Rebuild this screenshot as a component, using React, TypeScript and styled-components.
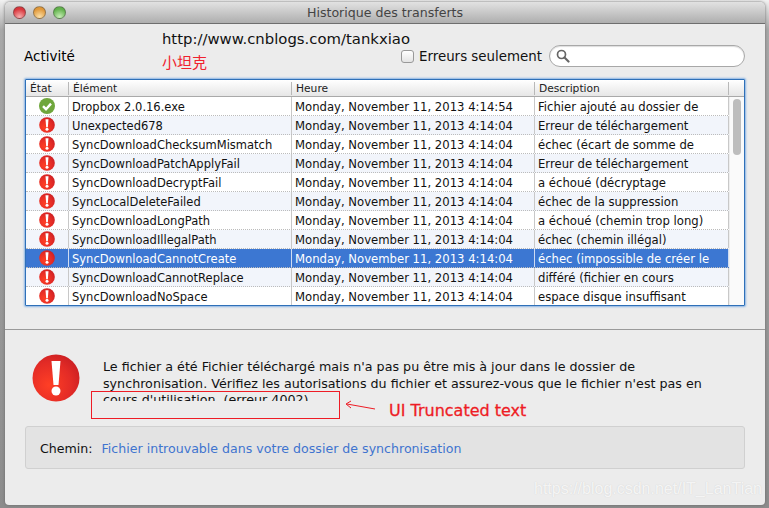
import styled, { createGlobalStyle } from 'styled-components'

const GlobalStyle = createGlobalStyle`
    html, body {
        margin: 0;
        padding: 0;
        width: 769px;
        height: 508px;
        overflow: hidden;
        background: linear-gradient(#f2f2f2 0, #a8a8a8 30px, #8c8c8c 100%);
        font-family: "DejaVu Sans", "Noto Sans CJK SC", sans-serif;
    }
`

const Page = styled.div`
    position: relative;
    width: 769px;
    height: 508px;
    padding: 2px 4px 3px 5px;
    box-sizing: border-box;
`

const Window = styled.div`
    height: 100%;
    display: flex;
    flex-direction: column;
    background: #ececec;
    border-radius: 5px 5px 4px 4px;
    box-shadow: 0 0 3px #666;
    overflow: hidden;
`

const TitleBar = styled.div`
    position: relative;
    height: 21px;
    flex: none;
    display: flex;
    align-items: center;
    justify-content: center;
    background: linear-gradient(#e2e2e2, #aeaeae);
    border-bottom: 1px solid #6e6e6e;
    font-size: 12.6px;
    color: #444;
`

const Lights = styled.div`
    position: absolute;
    left: 8px;
    top: 4px;
    display: flex;
    gap: 7px;
`

const Light = styled.span<{ $color: string; $glow: string }>`
    width: 13px;
    height: 13px;
    border-radius: 50%;
    box-sizing: border-box;
    border: 1px solid rgba(70, 70, 70, 0.5);
    background: radial-gradient(circle at 50% 90%, ${props => props.$glow} 0, ${props => props.$color} 70%);
`

const TopArea = styled.div`
    height: 306px;
    flex: none;
    box-sizing: border-box;
    padding: 0 20px;
    border-bottom: 1px solid #9a9a9a;
`

const Toolbar = styled.div`
    height: 55px;
    display: flex;
    align-items: flex-start;
`

const Heading = styled.div`
    width: 139px;
    margin: 23px 0 0 -1px;
    font-size: 13.5px;
    line-height: 18px;
    color: #000;
`

const Credit = styled.div`
    width: 239px;
    margin-left: -1px;
`

const Url = styled.div`
    margin-top: 6px;
    font-size: 14.85px;
    line-height: 18px;
    color: #111;
`

const Cn = styled.div`
    margin-top: 5px;
    font-family: "Noto Sans CJK SC", sans-serif;
    font-size: 15px;
    line-height: 18px;
    color: #f0222e;
`

const ErrorsOnly = styled.label`
    display: flex;
    align-items: center;
    gap: 5px;
    margin-top: 23px;
    height: 18px;
    font-size: 13.4px;
    color: #111;
    white-space: nowrap;
`

const CheckBox = styled.span`
    width: 13px;
    height: 13px;
    box-sizing: border-box;
    border: 1px solid #999;
    border-radius: 3px;
    background: linear-gradient(#fff, #e4e4e4);
`

const Search = styled.div`
    margin-left: 7px;
    margin-top: 21px;
    width: 196px;
    height: 22px;
    box-sizing: border-box;
    padding-left: 6px;
    display: flex;
    align-items: center;
    background: #fff;
    border: 1px solid #a8a8a8;
    border-radius: 11px;
    box-shadow: inset 0 1px 1px #ddd;
`

const Frame = styled.div`
    height: 225px;
    background: #fff;
    border: 1px solid #2f70b8;
    box-shadow: 0 0 2px 1px #8ab4e4;
    border-radius: 1px;
    display: flex;
    flex-direction: column;
    overflow: hidden;
`

const Columns = styled.div`
    display: grid;
    grid-template-columns: 43px 223px 243px 194px 15px;
`

const Header = styled(Columns)`
    height: 17px;
    flex: none;
    box-sizing: border-box;
    background: linear-gradient(#fff, #e6e6e6);
    border-bottom: 1px solid #a9a9a9;
    font-size: 10.7px;
    color: #222;
`

const HeaderCell = styled.div`
    padding-left: 4px;
    margin: 2px 0 1px;
    line-height: 13px;
    border-right: 1px solid #b8b8b8;
`

const Row = styled(Columns)<{ $striped: boolean; $selected: boolean }>`
    height: 19px;
    flex: none;
    box-sizing: border-box;
    border-bottom: 1px dotted #bcbcbc;
    font-size: 11.65px;
    line-height: 20px;
    color: ${props => (props.$selected ? '#fff' : '#111')};
    background: ${props => (props.$selected ? '#3c77d2' : props.$striped ? '#f2f5fb' : '#fff')};
`

const Cell = styled.div<{ $selected: boolean }>`
    padding-left: 3px;
    white-space: nowrap;
    overflow: hidden;
    border-right: 1px solid ${props => (props.$selected ? '#cfdcf2' : '#c8c8c8')};
`

const NameCell = styled(Cell)`
    font-size: 11.5px;
`

const IconCell = styled(Cell)`
    padding: 0;
    display: flex;
    align-items: center;
    justify-content: center;
`

const Body = styled.div`
    position: relative;
    flex: 1;
    min-height: 0;
`

const Rows = styled.div`
    display: flex;
    flex-direction: column;
`

const ScrollGutter = styled.div`
    position: absolute;
    top: 0;
    right: 0;
    bottom: 0;
    width: 15px;
    background: #fafafa;
    border-left: 1px solid #eee;
    box-sizing: border-box;
`

const ScrollThumb = styled.div`
    position: absolute;
    top: 2px;
    left: 3px;
    width: 8px;
    height: 56px;
    border-radius: 4px;
    background: #bdbdbd;
`

const Detail = styled.div`
    flex: 1;
    padding: 0 20px;
    display: flex;
    flex-direction: column;
`

const MessageRow = styled.div`
    height: 96px;
    flex: none;
    display: flex;
`

const BigIcon = styled.div`
    margin: 24px 0 0 7px;
    width: 48px;
    height: 48px;
`

const Message = styled.div`
    margin: 29px 0 0 23px;
    width: 610px;
    height: 42px;
    overflow: hidden;
    font-size: 12.7px;
    line-height: 16.5px;
    color: #111;
`

const PathBox = styled.div`
    height: 43px;
    box-sizing: border-box;
    padding: 1px 0 0 14px;
    display: flex;
    align-items: center;
    gap: 9px;
    background: #e3e3e3;
    border: 1px solid #d0d0d0;
    border-radius: 3px;
    font-size: 12.6px;
`

const PathLabel = styled.span`
    color: #111;
`

const PathLink = styled.span`
    color: #3f74cf;
`

const RedBox = styled.div`
    position: absolute;
    left: 91px;
    top: 391px;
    width: 247px;
    height: 26px;
    border: 1px solid #ee1c25;
`

const Arrow = styled.svg`
    position: absolute;
    left: 344px;
    top: 400px;
`

const Note = styled.div`
    position: absolute;
    left: 389px;
    top: 402px;
    font-size: 16px;
    line-height: 18px;
    font-weight: 500;
    color: #ee1c25;
    -webkit-text-stroke: 0.3px #ee1c25;
`

const Watermark = styled.div`
    position: absolute;
    left: 534px;
    top: 480px;
    font-family: "Liberation Sans", sans-serif;
    font-size: 16px;
    line-height: 18px;
    color: rgba(255, 255, 255, 0.8);
    text-shadow: 0 0 1px rgba(190, 190, 190, 0.7);
`

const TIME = 'Monday, November 11, 2013 4:14:04'

const rows = [
    { name: 'Dropbox 2.0.16.exe', time: 'Monday, November 11, 2013 4:14:54', desc: 'Fichier ajouté au dossier de', ok: true },
    { name: 'Unexpected678', time: TIME, desc: 'Erreur de téléchargement' },
    { name: 'SyncDownloadChecksumMismatch', time: TIME, desc: 'échec (écart de somme de' },
    { name: 'SyncDownloadPatchApplyFail', time: TIME, desc: 'Erreur de téléchargement' },
    { name: 'SyncDownloadDecryptFail', time: TIME, desc: 'a échoué (décryptage' },
    { name: 'SyncLocalDeleteFailed', time: TIME, desc: 'échec de la suppression' },
    { name: 'SyncDownloadLongPath', time: TIME, desc: 'a échoué (chemin trop long)' },
    { name: 'SyncDownloadIllegalPath', time: TIME, desc: 'échec (chemin illégal)' },
    { name: 'SyncDownloadCannotCreate', time: TIME, desc: 'échec (impossible de créer le', selected: true },
    { name: 'SyncDownloadCannotReplace', time: TIME, desc: 'différé (fichier en cours' },
    { name: 'SyncDownloadNoSpace', time: TIME, desc: 'espace disque insuffisant' },
]

const ErrorIcon = ({ size, id }: { size: number; id: string }) => (
    <svg width={size} height={size} viewBox="0 0 48 48">
        <defs>
            <radialGradient id={id} cx="0.35" cy="0.65" r="0.8">
                <stop offset="0" stopColor="#ff3f25" />
                <stop offset="0.6" stopColor="#e32b26" />
                <stop offset="1" stopColor="#c41c22" />
            </radialGradient>
        </defs>
        <circle cx="24" cy="24" r="23.5" fill={`url(#${id})`} />
        <path d="M19.5 7h9l-2 24h-5z" fill="#fff" />
        <circle cx="24" cy="37" r="4.5" fill="#fff" />
    </svg>
)

const OkIcon = () => (
    <svg width={16} height={16} viewBox="0 0 16 16">
        <circle cx="8" cy="8" r="8" fill="#6fa63c" />
        <path d="M4 8.2l3 3 5-5.6" fill="none" stroke="#fff" strokeWidth="2.4" />
    </svg>
)

const SearchIcon = () => (
    <svg width={14} height={14} viewBox="0 0 14 14">
        <circle cx="5.5" cy="5.5" r="4" fill="none" stroke="#666" strokeWidth="1.7" />
        <path d="M8.5 8.5l4 4" stroke="#666" strokeWidth="2.2" strokeLinecap="round" />
    </svg>
)

export default function App() {
    return (
        <Page>
            <GlobalStyle />
            <Window>
                <TitleBar>
                    <Lights>
                        <Light $color="#d9363c" $glow="#f7b0b0" />
                        <Light $color="#e0983a" $glow="#fbe0a8" />
                        <Light $color="#62b24c" $glow="#c8eeb8" />
                    </Lights>
                    Historique des transferts
                </TitleBar>
                <TopArea>
                    <Toolbar>
                        <Heading>Activité</Heading>
                        <Credit>
                            <Url>http://www.cnblogs.com/tankxiao</Url>
                            <Cn>小坦克</Cn>
                        </Credit>
                        <ErrorsOnly>
                            <CheckBox />
                            Erreurs seulement
                        </ErrorsOnly>
                        <Search>
                            <SearchIcon />
                        </Search>
                    </Toolbar>
                    <Frame>
                        <Header>
                            <HeaderCell>État</HeaderCell>
                            <HeaderCell>Élément</HeaderCell>
                            <HeaderCell>Heure</HeaderCell>
                            <HeaderCell>Description</HeaderCell>
                        </Header>
                        <Body>
                            <Rows>
                                {rows.map((row, i) => (
                                    <Row key={row.name} $striped={i % 2 === 1} $selected={!!row.selected}>
                                        <IconCell $selected={!!row.selected}>
                                            {row.ok ? <OkIcon /> : <ErrorIcon size={16} id={`err-${i}`} />}
                                        </IconCell>
                                        <NameCell $selected={!!row.selected}>{row.name}</NameCell>
                                        <Cell $selected={!!row.selected}>{row.time}</Cell>
                                        <Cell $selected={!!row.selected}>{row.desc}</Cell>
                                    </Row>
                                ))}
                            </Rows>
                            <ScrollGutter>
                                <ScrollThumb />
                            </ScrollGutter>
                        </Body>
                    </Frame>
                </TopArea>
                <Detail>
                    <MessageRow>
                        <BigIcon>
                            <ErrorIcon size={48} id="err-big" />
                        </BigIcon>
                        <Message>
                            Le fichier a été Fichier téléchargé mais n'a pas pu être mis à jour dans le dossier de
                            synchronisation. Vérifiez les autorisations du fichier et assurez-vous que le fichier n'est pas en
                            cours d'utilisation. (erreur 4002)
                        </Message>
                    </MessageRow>
                    <PathBox>
                        <PathLabel>Chemin:</PathLabel>
                        <PathLink>Fichier introuvable dans votre dossier de synchronisation</PathLink>
                    </PathBox>
                </Detail>
            </Window>
            <RedBox />
            <Arrow width="32" height="12" viewBox="0 0 32 12">
                <path d="M31 9L3 4M7 1L2 4l5 4" fill="none" stroke="#ee1c25" strokeWidth="1" />
            </Arrow>
            <Note>UI Truncated text</Note>
            <Watermark>https://blog.csdn.net/IT_LanTian</Watermark>
        </Page>
    )
}
